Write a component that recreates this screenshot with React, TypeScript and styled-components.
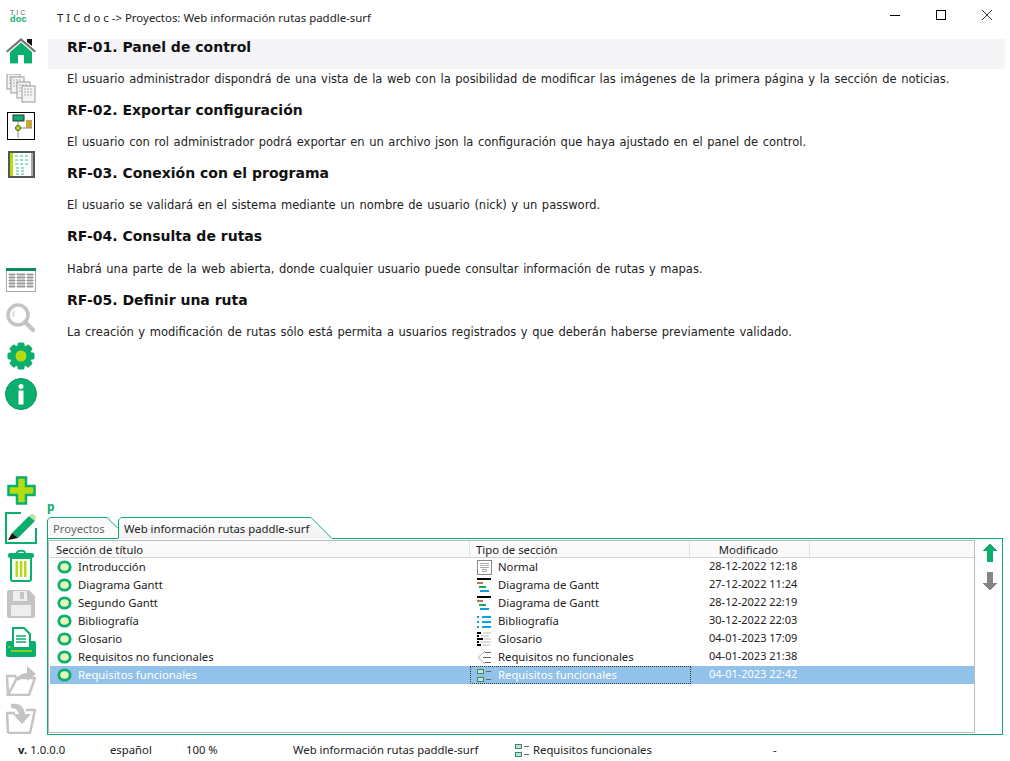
import React from "react";
import styled, { createGlobalStyle } from "styled-components";

const Global = createGlobalStyle`
  html, body { margin: 0; padding: 0; background: #fff; }
  body { font-family: "Noto Sans", "Open Sans", sans-serif; font-size: 11.3px; color: #1a1a1a; }
  * { box-sizing: border-box; }
`;
const Page = styled.div`
  width: 1010px; height: 761px; display: flex; flex-direction: column; overflow: hidden; background: #fff;
`;
const TitleBar = styled.header`
  height: 31px; flex: none; display: flex; align-items: flex-start;
`;
const Logo = styled.div`
  width: 57px; padding: 9px 0 0 10px; font-family: "Liberation Sans", sans-serif; font-size: 7px; line-height: 7px; color: #666; letter-spacing: 2px;
  b { display: block; color: #0aaf6e; font-size: 9px; letter-spacing: 0.3px; }
`;
const Title = styled.div`
  flex: 1; padding-top: 10px; line-height: 16px; color: #222; font-size: 11.45px;
`;
const WinButtons = styled.div`
  display: flex; width: 138px; padding-top: 9px; color: #000;
`;
const WinButton = styled.div`
  width: 46px; height: 12px; display: flex; justify-content: center; align-items: center;
`;
const Body = styled.div`
  height: 704px; flex: none; display: flex; min-height: 0;
`;
const Sidebar = styled.nav`
  width: 47px; flex: none; display: flex; flex-direction: column;
`;
const ToolGroup = styled.div<{ $gap: number }>`
  display: flex; flex-direction: column; margin-top: ${p => p.$gap}px;
`;
const Tool = styled.div`
  width: 42px; height: 38px; display: flex; align-items: center; justify-content: center;
`;
const Main = styled.main`
  flex: 1; display: flex; flex-direction: column; min-width: 0;
`;
const Doc = styled.article`
  height: 467px; flex: none; padding: 7.6px 5px 0 1px;
`;
const SectionBlock = styled.section`
  height: 63.3px;
`;
const Heading = styled.h2<{ $hl?: boolean }>`
  margin: 0; height: 30.2px; padding: 0 0 0 19px; font: bold 14px/17px "DejaVu Sans", sans-serif; color: #111;
  background: ${p => (p.$hl ? "#f5f5f8" : "transparent")};
`;
const Para = styled.p`
  margin: 0; padding-left: 19px; font: 11.5px/20px "DejaVu Sans", sans-serif; word-spacing: 0.9px; color: #222; white-space: nowrap;
`;
const PMark = styled.div`
  height: 19px; font: bold 12px/17px "Noto Sans", sans-serif; color: #0aaf6e;
`;
const TabBar = styled.div`
  height: 21px; display: flex; align-items: stretch; position: relative; z-index: 1;
`;
const Tab = styled.div<{ $active?: boolean; $w: number }>`
  position: relative; width: ${p => p.$w}px; padding: 4px 0 0 6px; line-height: 16px; color: ${p => (p.$active ? "#222" : "#666")};
  white-space: nowrap;
  svg { position: absolute; left: 0; top: 0; }
  span { position: relative; }
`;
const TabPanel = styled.div`
  width: 956px; height: 197px; border: 1px solid #0aaf6e; padding: 1px 0 1px 0; display: flex;
`;
const ListView = styled.div`
  width: 927px; height: 193px; border: 1px solid #bdbdbd; padding-left: 1px; display: flex; flex-direction: column;
`;
const GridRow = styled.div`
  display: grid; grid-template-columns: 420px 220px 120px 1fr;
`;
const HeaderRow = styled(GridRow)`
  height: 17px; background: #fafafa; border-bottom: 1px solid #d5d5d5; line-height: 17px;
`;
const HeadCell = styled.div<{ $center?: boolean }>`
  padding-left: 6px; border-right: 1px solid #e2e2e2; color: #222;
  ${p => p.$center && "text-align: center; padding-left: 0; padding-right: 2px;"}
`;
const Row = styled(GridRow)<{ $sel?: boolean }>`
  height: 18px; line-height: 16px; background: ${p => (p.$sel ? "#92c1e9" : "transparent")};
  color: ${p => (p.$sel ? "#fff" : "#222")};
`;
const NameCell = styled.div`
  display: flex; align-items: center; padding-left: 7px; gap: 6px;
`;
const TypeCell = styled.div<{ $focus?: boolean }>`
  display: flex; align-items: center; gap: 6px; padding-left: 7px; margin-right: -1px;
  outline: ${p => (p.$focus ? "1px dotted #3a3a2a" : "none")}; outline-offset: -1px;
`;
const DateCell = styled.div`
  padding-left: 19px; font-size: 11px;
`;
const Arrows = styled.div`
  width: 27px; display: flex; flex-direction: column; align-items: center; padding: 4px 0 0 3px; gap: 10px;
`;
const StatusBar = styled.footer`
  height: 22px; flex: none; margin-top: 4px; display: grid; grid-template-columns: 110px 76px 107px 222px 258px 1fr; line-height: 22px; color: #222;
`;
const StatusCell = styled.div`
  display: flex; align-items: center; gap: 3px;
  b { font-weight: 700; }
`;
const VersionCell = styled(StatusCell)`
  padding-left: 18px;
`;

const G = "#0aaf6e", L = "#b5dc10", GY = "#c4c4c4";

const Home = () => (
  <svg width="32" height="28" viewBox="0 0 32 28"><path d="M22 3h5v7l-5-4z" fill="#111"/><path d="M1 15L16 2l15 13-1.500 1.500L16 5 2.500 16.500z" fill="#777"/><path d="M5 16L16 6.500 27 16v11H19v-8h-6v8H5z" fill={G}/><path d="M5 27h8v1H5zM19 27h8v1h-8z" fill="#9fdcc4"/></svg>
);
const Pages = () => (
  <svg width="30" height="29" viewBox="0 0 30 29">
    {[[1,0,13,15],[5,3,13,16],[11,8,13,16],[16,12,13,16]].map(([x,y,w,h],i)=>(
      <g key={i}><rect x={x} y={y} width={w} height={h} fill="#f4f4f4" stroke="#999"/><path d={`M${x+2} ${y+3}h${w-4}M${x+2} ${y+6}h${w-4}M${x+2} ${y+9}h${w-4}`} stroke="#aaa" strokeDasharray="2 1"/></g>
    ))}
  </svg>
);
const Flow = () => (
  <svg width="29" height="28" viewBox="0 0 29 28"><rect x=".5" y=".5" width="27" height="27" fill="#fff" stroke="#000"/><rect x="6" y="3" width="11" height="6" fill={G} stroke="#333"/><rect x="19" y="8" width="6" height="8" fill="#c9a93c"/><path d="M11 9v17M11 16h14" stroke="#888"/><circle cx="11" cy="16" r="2.500" fill={L} stroke="#4a6a10"/></svg>
);
const Notes = () => (
  <svg width="27" height="27" viewBox="0 0 27 27"><rect x="1" y="1" width="25" height="25" fill="#fff" stroke="#555" strokeWidth="2"/><rect x="2" y="2" width="3" height="23" fill={L}/><rect x="23" y="2" width="2" height="23" fill="#aaa"/><path d="M7 5h14M7 9h14M7 13h14M8 17h10M8 20h10M8 23h10" stroke={G} strokeDasharray="3 2" opacity=".8"/></svg>
);
const TableIcon = () => (
  <svg width="30" height="24" viewBox="0 0 30 24"><rect x=".5" y=".5" width="29" height="23" fill="#fff" stroke="#aaa"/><rect x="0" y="0" width="30" height="3" fill="#0a8a5e"/><path d="M3 6h6v1H3zM11 6h8v1h-8zM21 6h6v1h-6zM3 9h6v1H3zM11 9h8v1h-8zM21 9h6v1h-6zM3 12h6v1H3zM11 12h8v1h-8zM21 12h6v1h-6zM3 15h6v1H3zM11 15h8v1h-8zM21 15h6v1h-6zM3 18h6v1H3zM11 18h8v1h-8zM21 18h6v1h-6z" stroke="#999" fill="#999"/></svg>
);
const Search = () => (
  <svg width="30" height="30" viewBox="0 0 30 30"><circle cx="12" cy="12" r="10" fill="#fff" stroke={GY} strokeWidth="3.500"/><path d="M19 19l8 8" stroke={GY} strokeWidth="4.500" strokeLinecap="round"/><path d="M8 8c-1 2-1 4 0 6" stroke="#ddd" strokeWidth="2" fill="none"/></svg>
);
const Gear = () => (
  <svg width="28" height="28" viewBox="0 0 28 28"><g fill={G}><circle cx="14" cy="14" r="11"/>{[0,45,90,135,180,225,270,315].map(a=><rect key={a} x="10.500" y="0.500" width="7" height="6" rx="1.500" transform={`rotate(${a} 14 14)`}/>)}</g><circle cx="14" cy="14" r="5.500" fill={L}/></svg>
);
const Info = () => (
  <svg width="32" height="32" viewBox="0 0 32 32"><circle cx="16" cy="16" r="15.500" fill={G} stroke="#0a9a60"/><rect x="13.500" y="12.500" width="5" height="14" fill="#fff"/><circle cx="16" cy="8.500" r="2.500" fill="#fff"/></svg>
);
const Plus = () => (
  <svg width="29" height="29" viewBox="0 0 29 29"><path d="M10 1.500h9v8.500h8.500v9H19v8.500h-9V19H1.500v-9H10z" fill={L} stroke={G} strokeWidth="2.500"/></svg>
);
const Edit = () => (
  <svg width="32" height="32" viewBox="0 0 32 32"><path d="M16 1H1v30h30V16" fill="none" stroke={G} strokeWidth="2"/><path d="M7 21L24 4l6 5-17 17z" fill={G}/><path d="M24 4l3-2.500 4 3-1 4.500z" fill="#bfe0a0"/><path d="M7 21l-4 7 10-2z" fill="#111"/></svg>
);
const Trash = () => (
  <svg width="26" height="32" viewBox="0 0 26 32"><path d="M9 3c0-3 8-3 8 0" fill="none" stroke={G} strokeWidth="2"/><rect x="0" y="3" width="26" height="5" rx="2" fill={G}/><path d="M3 8h20v21a2 2 0 0 1-2 2H5a2 2 0 0 1-2-2z" fill="#fff" stroke={G} strokeWidth="2"/><path d="M7.500 11h2.500v16H7.500zM11.800 11h2.500v16h-2.500zM16 11h2.500v16H16z" fill={L}/></svg>
);
const Save = () => (
  <svg width="28" height="28" viewBox="0 0 28 28"><path d="M0 2a2 2 0 0 1 2-2h20l6 6v20a2 2 0 0 1-2 2H2a2 2 0 0 1-2-2z" fill={GY}/><rect x="6" y="1" width="14" height="10" fill="#eee"/><rect x="13" y="2" width="4" height="7" fill={GY}/><rect x="4" y="15" width="20" height="11" fill="#eee"/></svg>
);
const Print = () => (
  <svg width="30" height="30" viewBox="0 0 30 30"><path d="M2 14h26a2 2 0 0 1 2 2v12a2 2 0 0 1-2 2H2a2 2 0 0 1-2-2V16a2 2 0 0 1 2-2z" fill={G}/><path d="M7 1h11l6 6v14H7z" fill="#fff" stroke={G} strokeWidth="2"/><path d="M10 9h10M10 12h10M10 15h10" stroke={G} strokeWidth="1.500"/><path d="M5 24h21" stroke={L} strokeWidth="1.500"/><path d="M2 20h3" stroke={L}/></svg>
);
const Export = () => (
  <svg width="30" height="31" viewBox="0 0 30 31"><path d="M2 30L1 11h8l2 3h3" fill="none" stroke={GY} strokeWidth="2.500"/><path d="M2 30h21l6-17H11z" fill="none" stroke={GY} strokeWidth="2.500"/><path d="M9 17c1-5 6-9 12-9V1l9 8-9 7v-4c-5 0-9 2-12 5z" fill={GY}/></svg>
);
const Import = () => (
  <svg width="30" height="31" viewBox="0 0 30 31"><path d="M2 30L1 10h8M20 7h9l-5 23H2" fill="none" stroke={GY} strokeWidth="2.500"/><path d="M5 1c8-1 13 2 14 10h6l-9 10-9-10h6C12 7 9 5 5 5z" fill={GY}/></svg>
);

const Ring = () => (
  <svg width="15" height="14" viewBox="0 0 15 14" style={{ flex: "none" }}><ellipse cx="7.500" cy="7" rx="5.700" ry="5.200" fill="#e3f5b8" stroke={G} strokeWidth="2.800"/></svg>
);
const TNormal = () => (
  <svg width="15" height="15" viewBox="0 0 15 15"><rect x=".5" y=".5" width="14" height="14" fill="#fff" stroke="#888"/><path d="M3 3.500h9M3 5.500h4M8 5.500h4M3 7.500h9M5.500 9.500h4v2h-4z" stroke="#aaa" fill="none"/></svg>
);
const TGantt = () => (
  <svg width="15" height="15" viewBox="0 0 15 15"><rect x="0" y="0" width="14" height="2" fill="#000"/><rect x="0" y="4" width="6" height="2" fill="#b07a5a"/><rect x="2" y="8" width="7" height="2" fill="#1aa860"/><rect x="3" y="12" width="9" height="2" fill="#10a0e0"/></svg>
);
const TBib = () => (
  <svg width="15" height="15" viewBox="0 0 15 15"><path d="M0 2h2v2H0zM0 7h2v2H0zM0 12h2v2H0zM5 2h9v2H5zM5 7h9v2H5zM5 12h9v2H5z" fill="#10a0e0"/></svg>
);
const TGlos = () => (
  <svg width="15" height="15" viewBox="0 0 15 15"><path d="M0 0h4v2H0zM0 3h2v2H0zM0 6h6v2H0zM0 9h2v2H0zM0 12h4v2H0z" fill="#000"/><path d="M6 1h8M4 4h8M7 7h7M4 10h10M5 13h8" stroke="#bbb"/></svg>
);
const TNoFun = () => (
  <svg width="15" height="15" viewBox="0 0 15 15"><path d="M8 1L1 7.500 8 14" fill="none" stroke="#aaa"/><path d="M8 2.500h6M6 7.500h8M8 12.500h6" stroke="#666"/></svg>
);
const TFun = () => (
  <svg width="15" height="15" viewBox="0 0 15 15"><rect x=".5" y="1.500" width="6" height="4" fill="#bfe8cf" stroke="#3a8a70"/><rect x=".5" y="9.500" width="6" height="4" fill="#bfe8cf" stroke="#3a8a70"/><path d="M9 3.500h5M9 11.500h5" stroke="#666"/></svg>
);
const ArrowUp = ({ c }: { c: string }) => (
  <svg width="14" height="18" viewBox="0 0 14 18" shapeRendering="crispEdges"><path d="M6 0h2v1h1v1h1v1h1v1h1v1h1v1h1v1H10v11H4V7H0V6h1V5h1V4h1V3h1V2h1V1h1z" fill={c}/></svg>
);
const ArrowDown = ({ c }: { c: string }) => (
  <svg width="14" height="18" viewBox="0 0 14 18" shapeRendering="crispEdges"><path d="M4 0h6v11h4v1h-1v1h-1v1h-1v1h-1v1H9v1H8v1H6v-1H5v-1H4v-1H3v-1H2v-1H1v-1H0v-1h4z" fill={c}/></svg>
);

const sections = [
  ["RF-01. Panel de control", "El usuario administrador dispondrá de una vista de la web con la posibilidad de modificar las imágenes de la primera página y la sección de noticias."],
  ["RF-02. Exportar configuración", "El usuario con rol administrador podrá exportar en un archivo json la configuración que haya ajustado en el panel de control."],
  ["RF-03. Conexión con el programa", "El usuario se validará en el sistema mediante un nombre de usuario (nick) y un password."],
  ["RF-04. Consulta de rutas", "Habrá una parte de la web abierta, donde cualquier usuario puede consultar información de rutas y mapas."],
  ["RF-05. Definir una ruta", "La creación y modificación de rutas sólo está permita a usuarios registrados y que deberán haberse previamente validado."],
];
const rows: [string, React.ReactNode, string, string][] = [
  ["Introducción", <TNormal />, "Normal", "28-12-2022 12:18"],
  ["Diagrama Gantt", <TGantt />, "Diagrama de Gantt", "27-12-2022 11:24"],
  ["Segundo Gantt", <TGantt />, "Diagrama de Gantt", "28-12-2022 22:19"],
  ["Bibliografía", <TBib />, "Bibliografía", "30-12-2022 22:03"],
  ["Glosario", <TGlos />, "Glosario", "04-01-2023 17:09"],
  ["Requisitos no funcionales", <TNoFun />, "Requisitos no funcionales", "04-01-2023 21:38"],
  ["Requisitos funcionales", <TFun />, "Requisitos funcionales", "04-01-2023 22:42"],
];

export default function App() {
  return (
    <Page>
      <Global />
      <TitleBar>
        <Logo>TIC<b>doc</b></Logo>
        <Title>T I C d o c -&gt; Proyectos: Web información rutas paddle-surf</Title>
        <WinButtons>
          <WinButton><svg width="10" height="10" viewBox="0 0 10 10"><path d="M0 5.500h10" stroke="#000"/></svg></WinButton>
          <WinButton><svg width="10" height="10" viewBox="0 0 10 10"><rect x=".5" y=".5" width="9" height="9" fill="none" stroke="#000"/></svg></WinButton>
          <WinButton><svg width="10" height="10" viewBox="0 0 10 10"><path d="M0 0l10 10M10 0L0 10" stroke="#000" strokeWidth=".8"/></svg></WinButton>
        </WinButtons>
      </TitleBar>
      <Body>
        <Sidebar>
          <ToolGroup $gap={0}>
            <Tool><Home /></Tool><Tool><Pages /></Tool><Tool><Flow /></Tool><Tool><Notes /></Tool>
          </ToolGroup>
          <ToolGroup $gap={78}>
            <Tool><TableIcon /></Tool><Tool><Search /></Tool><Tool><Gear /></Tool><Tool><Info /></Tool>
          </ToolGroup>
          <ToolGroup $gap={58}>
            <Tool><Plus /></Tool><Tool><Edit /></Tool><Tool><Trash /></Tool><Tool><Save /></Tool><Tool><Print /></Tool><Tool><Export /></Tool><Tool><Import /></Tool>
          </ToolGroup>
        </Sidebar>
        <Main>
          <Doc>
            {sections.map(([h, p], i) => (
              <SectionBlock key={h}>
                <Heading $hl={i === 0}>{h}</Heading>
                <Para>{p}</Para>
              </SectionBlock>
            ))}
          </Doc>
          <PMark>p</PMark>
          <TabBar>
            <Tab $w={71}>
              <svg width="72" height="21">
                <path d="M.5 21V3L3 .5H60L71 11.500V21z" fill="#fafafa"/>
                <path d="M.5 21V3L3 .5H60L71 11.500" fill="none" stroke={G}/>
              </svg>
              <span>Proyectos</span>
            </Tab>
            <Tab $active $w={213}>
              <svg width="216" height="22">
                <defs>
                  <linearGradient id="tabFill" x1="0" y1="0" x2="0" y2="1">
                    <stop offset="0" stopColor="#fff"/><stop offset="1" stopColor="#f0f0f0"/>
                  </linearGradient>
                </defs>
                <path d="M.5 22V3L3 .5H193L214 21.500V22z" fill="url(#tabFill)"/>
                <path d="M.5 21V3L3 .5H193L213.500 21" fill="none" stroke={G}/>
              </svg>
              <span>Web información rutas paddle-surf</span>
            </Tab>
          </TabBar>
          <TabPanel>
            <ListView>
              <HeaderRow>
                <HeadCell>Sección de título</HeadCell>
                <HeadCell>Tipo de sección</HeadCell>
                <HeadCell $center>Modificado</HeadCell>
                <div />
              </HeaderRow>
              {rows.map(([n, icon, t, d], i) => (
                <Row key={n} $sel={i === 6}>
                  <NameCell><Ring />{n}</NameCell>
                  <TypeCell $focus={i === 6}>{icon}{t}</TypeCell>
                  <DateCell>{d}</DateCell>
                  <div />
                </Row>
              ))}
            </ListView>
            <Arrows><ArrowUp c={G} /><ArrowDown c="#858585" /></Arrows>
          </TabPanel>
        </Main>
      </Body>
      <StatusBar>
        <VersionCell><b>v.</b> 1.0.0.0</VersionCell>
        <StatusCell>español</StatusCell>
        <StatusCell>100 %</StatusCell>
        <StatusCell>Web información rutas paddle-surf</StatusCell>
        <StatusCell><TFun />Requisitos funcionales</StatusCell>
        <StatusCell>-</StatusCell>
      </StatusBar>
    </Page>
  );
}
